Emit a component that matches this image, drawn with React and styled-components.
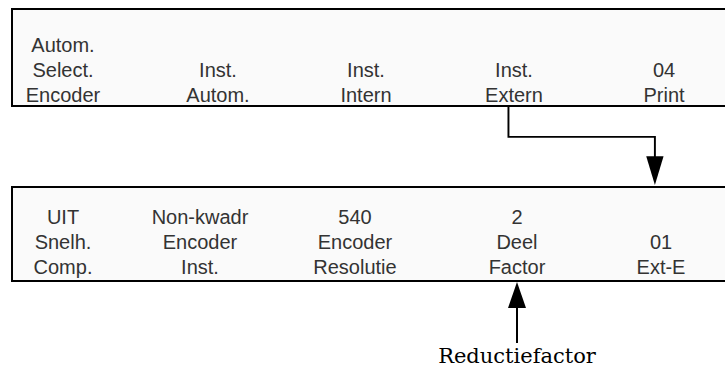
import styled, { createGlobalStyle } from "styled-components";

const GlobalStyle = createGlobalStyle`
  body {
    margin: 0;
    background: #fff;
    overflow: hidden;
  }
`;

const topRow = [
  ["Autom.", "Select.", "Encoder"],
  ["", "Inst.", "Autom."],
  ["", "Inst.", "Intern"],
  ["", "Inst.", "Extern"],
  ["", "04", "Print"],
];

const bottomRow = [
  ["UIT", "Snelh.", "Comp."],
  ["Non-kwadr", "Encoder", "Inst."],
  ["540", "Encoder", "Resolutie"],
  ["2", "Deel", "Factor"],
  ["", "01", "Ext-E"],
];

const TOP_COLS = "100px 210px 86px 210px 90px";
const BOTTOM_COLS = "100px 174px 136px 188px 100px";

const App = () => {
  return (
    <Page>
      <GlobalStyle />
      <Panel $height={99} $padTop={23} $cols={TOP_COLS}>
        {topRow.map((lines, i) => (
          <Cell key={i}>
            {lines.map((l, j) => (
              <Line key={j}>{l || "\u00a0"}</Line>
            ))}
          </Cell>
        ))}
      </Panel>

      <Connector width="725" height="82" viewBox="0 107 725 82">
        <polyline
          points="514,107 514,138 666,138 666,162"
          fill="none"
          stroke="#000"
          strokeWidth="2"
        />
        <polygon points="657,158 675,158 666,188" fill="#000" />
      </Connector>

      <Panel $height={96} $padTop={17} $cols={BOTTOM_COLS}>
        {bottomRow.map((lines, i) => (
          <Cell key={i}>
            {lines.map((l, j) => (
              <Line key={j}>{l || "\u00a0"}</Line>
            ))}
          </Cell>
        ))}
      </Panel>

      <Callout $cols={BOTTOM_COLS}>
        <CalloutItem $col={4}>
          <svg width="20" height="62" viewBox="0 0 20 62">
            <polygon points="10,0 1,26 19,26" fill="#000" />
            <line x1="10" y1="24" x2="10" y2="61" stroke="#000" strokeWidth="2" />
          </svg>
          <Caption>Reductiefactor</Caption>
        </CalloutItem>
      </Callout>
    </Page>
  );
};

export default App;

const Page = styled.div`
  width: 725px;
  height: 368px;
  padding-top: 8px;
  box-sizing: border-box;
  display: flex;
  flex-direction: column;
`;

const Panel = styled.div`
  box-sizing: border-box;
  margin-left: 11px;
  width: 740px;
  height: ${(p) => p.$height}px;
  padding-top: ${(p) => p.$padTop}px;
  border: 2px solid #000;
  border-right: none;
  background: #fafafa;
  display: grid;
  grid-template-columns: ${(p) => p.$cols};
  align-items: start;
`;

const Cell = styled.div`
  display: flex;
  flex-direction: column;
  align-items: center;
  font-family: "Liberation Sans", Arial, sans-serif;
  font-size: 20px;
  line-height: 25px;
  color: #333;
  white-space: nowrap;
`;

const Line = styled.span`
  display: block;
`;

const Connector = styled.svg`
  display: block;
`;

const Callout = styled.div`
  margin-left: 13px;
  display: grid;
  grid-template-columns: ${(p) => p.$cols};
`;

const CalloutItem = styled.div`
  grid-column: ${(p) => p.$col};
  display: flex;
  flex-direction: column;
  align-items: center;

  svg {
    display: block;
  }
`;

const Caption = styled.div`
  font-family: "DejaVu Serif", serif;
  font-size: 21px;
  line-height: 24px;
  color: #000;
  white-space: nowrap;
`;
